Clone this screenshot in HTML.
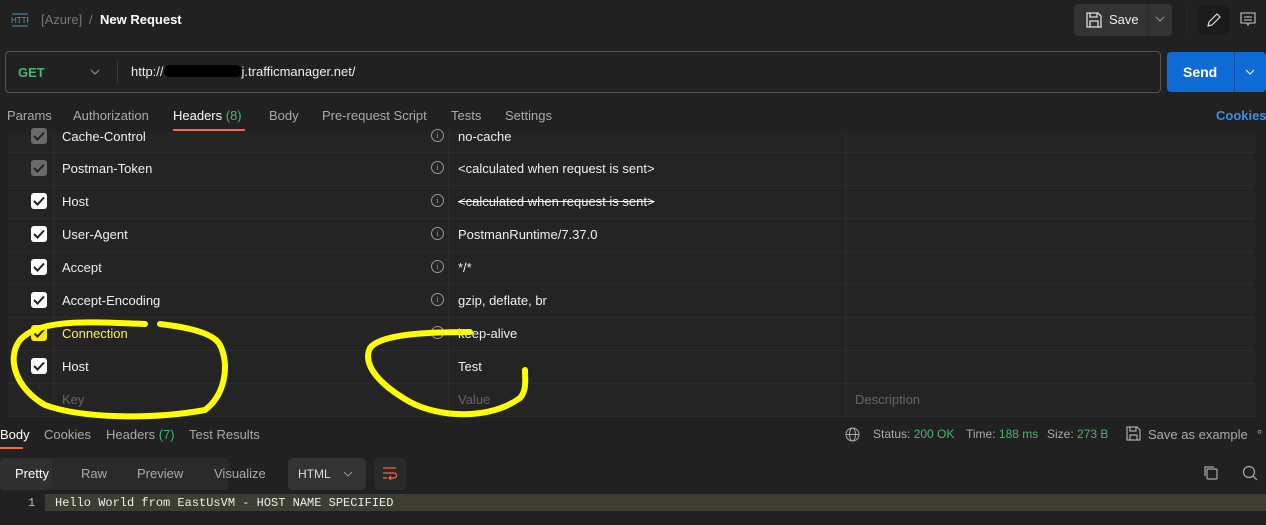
<!DOCTYPE html><html><head><style>
body{margin:0;width:1266px;height:525px;background:#212121;font-family:"Liberation Sans",sans-serif;color:#e6e6e6;font-size:13px;position:relative;overflow:hidden}
.a{position:absolute;white-space:nowrap}
.row{position:absolute;left:8px;width:1247px;height:33px;border-bottom:1px solid #2c2c2c}
.cb{position:absolute;left:23px;top:8px;width:16px;height:16px;border-radius:3px;background:#fff}
.cb.g{background:#6b6b6b}
.cb svg{position:absolute;left:2px;top:3px}
.k{position:absolute;left:54px;top:9px;color:#f0f0f0}
.i{position:absolute;left:423px;top:9px;width:11px;height:11px;border:1px solid #999;border-radius:50%;font-size:8px;color:#999;text-align:center;line-height:11px;font-family:"Liberation Serif",serif}
.v{position:absolute;left:450px;top:9px;color:#f0f0f0}
.vl{position:absolute;left:440px;top:0;height:33px;border-left:1px solid #2c2c2c}
.dl{position:absolute;left:837px;top:0;height:33px;border-left:1px solid #2c2c2c}
.cl{position:absolute;left:45px;top:0;height:33px;border-left:1px solid #2c2c2c}
.r1 .cl,.r1 .vl,.r1 .dl{height:21px}
</style></head><body>
<svg class="a" style="left:11px;top:12px" width="18" height="16"><text x="0" y="11" font-size="8" fill="#4aa3b5" font-family="Liberation Sans">HTTP</text><path d="M1 2h16M1 14h16" stroke="#4aa3b5"/></svg>
<div class="a" style="left:41px;top:12px;color:#777">[Azure]</div>
<div class="a" style="left:89px;top:12px;color:#777">/</div>
<div class="a" style="left:100px;top:12px;color:#fff;font-weight:bold">New Request</div>
<div class="a" style="left:1074px;top:4px;width:98px;height:32px;background:#333;border-radius:4px"></div>
<div class="a" style="left:1147px;top:4px;width:1px;height:32px;background:#2a2a2a"></div>
<svg class="a" style="left:1086px;top:12px" width="16" height="16"><path d="M1 1h11l3 3v11H1z M4 1v4h7V1 M4 15v-6h8v6" fill="none" stroke="#ddd" stroke-width="1.3"/></svg>
<div class="a" style="left:1109px;top:12px;color:#eee">Save</div>
<svg class="a" style="left:1155px;top:16px" width="10" height="6"><path d="M1 1l4 4 4-4" fill="none" stroke="#999"/></svg>
<div class="a" style="left:1187px;top:6px;width:1px;height:28px;background:#2b2b2b"></div>
<div class="a" style="left:1198px;top:5px;width:32px;height:30px;background:#1b1b1b;border-radius:4px"></div>
<svg class="a" style="left:1206px;top:12px" width="16" height="16"><path d="M2 14l1-4 8-8 3 3-8 8z" fill="none" stroke="#ddd" stroke-width="1.2"/></svg>
<svg class="a" style="left:1240px;top:12px" width="16" height="16"><path d="M1 1h14v10H9l-1 2-1-2H1z M4 5h8M4 8h8" fill="none" stroke="#ccc" stroke-width="1.1"/></svg>
<div class="a" style="left:5px;top:51px;width:1154px;height:40px;border:1px solid #555;border-radius:4px"></div>
<div class="a" style="left:18px;top:65px;color:#49b66f;font-weight:bold">GET</div>
<svg class="a" style="left:90px;top:69px" width="10" height="6"><path d="M1 1l4 4 4-4" fill="none" stroke="#999"/></svg>
<div class="a" style="left:117px;top:61px;width:1px;height:22px;background:#3a3a3a"></div>
<div class="a" style="left:131px;top:64px;color:#eee">http://<span style="display:inline-block;width:78px;height:12px;background:#000;border-radius:6px;vertical-align:-1px"></span>j.trafficmanager.net/</div>
<div class="a" style="left:1167px;top:52px;width:99px;height:40px;background:#0f6bd6;border-radius:4px"></div>
<div class="a" style="left:1234px;top:52px;width:1px;height:40px;background:#0a4fa3"></div>
<div class="a" style="left:1183px;top:64px;color:#fff;font-weight:bold;font-size:14px">Send</div>
<svg class="a" style="left:1245px;top:69px" width="10" height="6"><path d="M1 1l4 4 4-4" fill="none" stroke="#fff"/></svg>
<div class="a" style="left:7px;top:108px;color:#aaa">Params</div>
<div class="a" style="left:73px;top:108px;color:#aaa">Authorization</div>
<div class="a" style="left:173px;top:108px;color:#fff">Headers <span style="color:#49b66f">(8)</span></div>
<div class="a" style="left:173px;top:129px;width:72px;height:2px;background:#f26b3a"></div>
<div class="a" style="left:269px;top:108px;color:#aaa">Body</div>
<div class="a" style="left:322px;top:108px;color:#aaa">Pre-request Script</div>
<div class="a" style="left:451px;top:108px;color:#aaa">Tests</div>
<div class="a" style="left:505px;top:108px;color:#aaa">Settings</div>
<div class="a" style="left:1216px;top:108px;color:#3b8ee8;font-weight:bold">Cookies</div>

<div class="a" style="left:8px;top:131px;width:1247px;height:286px;background:#242424"></div>
<div class="row r1" style="top:131px;height:21px"><div class="cl"></div><div class="vl"></div><div class="dl"></div><div class="cb g" style="top:-3px"><svg width="12" height="10"><path d="M1 5l3.5 3.5L11 1.5" stroke="#222" stroke-width="2" fill="none"/></svg></div><div class="k" style="top:-2px">Cache-Control</div><div class="i" style="top:-2px">i</div><div class="v" style="top:-2px">no-cache</div></div>
<div class="row" style="top:152px"><div class="cl"></div><div class="vl"></div><div class="dl"></div><div class="cb g"><svg width="12" height="10"><path d="M1 5l3.5 3.5L11 1.5" stroke="#222" stroke-width="2" fill="none"/></svg></div><div class="k">Postman-Token</div><div class="i">i</div><div class="v">&lt;calculated when request is sent&gt;</div></div>
<div class="row" style="top:185px"><div class="cl"></div><div class="vl"></div><div class="dl"></div><div class="cb"><svg width="12" height="10"><path d="M1 5l3.5 3.5L11 1.5" stroke="#222" stroke-width="2" fill="none"/></svg></div><div class="k">Host</div><div class="i">i</div><div class="v" style="text-decoration:line-through">&lt;calculated when request is sent&gt;</div></div>
<div class="row" style="top:218px"><div class="cl"></div><div class="vl"></div><div class="dl"></div><div class="cb"><svg width="12" height="10"><path d="M1 5l3.5 3.5L11 1.5" stroke="#222" stroke-width="2" fill="none"/></svg></div><div class="k">User-Agent</div><div class="i">i</div><div class="v">PostmanRuntime/7.37.0</div></div>
<div class="row" style="top:251px"><div class="cl"></div><div class="vl"></div><div class="dl"></div><div class="cb"><svg width="12" height="10"><path d="M1 5l3.5 3.5L11 1.5" stroke="#222" stroke-width="2" fill="none"/></svg></div><div class="k">Accept</div><div class="i">i</div><div class="v">*/*</div></div>
<div class="row" style="top:284px"><div class="cl"></div><div class="vl"></div><div class="dl"></div><div class="cb"><svg width="12" height="10"><path d="M1 5l3.5 3.5L11 1.5" stroke="#222" stroke-width="2" fill="none"/></svg></div><div class="k">Accept-Encoding</div><div class="i">i</div><div class="v">gzip, deflate, br</div></div>
<div class="row" style="top:317px"><div class="cl"></div><div class="vl"></div><div class="dl"></div><div class="cb" style="background:#ffea00"><svg width="12" height="10"><path d="M1 5l3.5 3.5L11 1.5" stroke="#222" stroke-width="2" fill="none"/></svg></div><div class="k" style="color:#ffee55">Connection</div><div class="i">i</div><div class="v">keep-alive</div></div>
<div class="row" style="top:350px"><div class="cl"></div><div class="vl"></div><div class="dl"></div><div class="cb"><svg width="12" height="10"><path d="M1 5l3.5 3.5L11 1.5" stroke="#222" stroke-width="2" fill="none"/></svg></div><div class="k">Host</div><div class="v">Test</div></div>
<div class="row" style="top:383px"><div class="cl"></div><div class="vl"></div><div class="dl"></div><div class="k" style="color:#666">Key</div><div class="v" style="color:#666">Value</div><div class="a" style="left:847px;top:9px;color:#666">Description</div></div>
<svg class="a" style="left:0;top:310px" width="560" height="120"><path d="M145 14C90 12 40 8 20 30C5 50 18 80 45 95C80 108 150 110 205 100C225 85 230 55 220 35C215 25 195 18 160 14" fill="none" stroke="#ffff00" stroke-width="6" stroke-linecap="round"/><path d="M470 22C420 22 380 25 370 38C362 55 380 75 410 92C440 108 490 110 520 88C527 80 525 70 525 60" fill="none" stroke="#ffff00" stroke-width="6" stroke-linecap="round"/></svg>
<div class="a" style="left:0;top:427px;color:#fff">Body</div>
<div class="a" style="left:0;top:447px;width:23px;height:2px;background:#f26b3a"></div>
<div class="a" style="left:44px;top:427px;color:#aaa">Cookies</div>
<div class="a" style="left:106px;top:427px;color:#aaa">Headers <span style="color:#49b66f">(7)</span></div>
<div class="a" style="left:189px;top:427px;color:#aaa">Test Results</div>
<svg class="a" style="left:845px;top:427px" width="15" height="15"><circle cx="7.5" cy="7.5" r="6.5" fill="none" stroke="#aaa"/><ellipse cx="7.5" cy="7.5" rx="3" ry="6.5" fill="none" stroke="#aaa"/><path d="M1 7.5h13" stroke="#aaa"/></svg>
<div class="a" style="left:873px;top:427px;color:#aaa;font-size:12px">Status: <span style="color:#49b66f">200 OK</span></div>
<div class="a" style="left:966px;top:427px;color:#aaa;font-size:12px">Time: <span style="color:#49b66f">188 ms</span></div>
<div class="a" style="left:1047px;top:427px;color:#aaa;font-size:12px">Size: <span style="color:#49b66f">273 B</span></div>
<svg class="a" style="left:1126px;top:426px" width="15" height="15"><path d="M1 1h10l3 3v10H1z M4 1v4h6V1 M4 14v-5h7v5" fill="none" stroke="#aaa" stroke-width="1.2"/></svg>
<div class="a" style="left:1148px;top:427px;color:#aaa">Save as example</div>
<div class="a" style="left:1257px;top:427px;color:#aaa">°</div>
<div class="a" style="left:0;top:458px;width:228px;height:32px;background:#2a2a2a;border-radius:4px"></div>
<div class="a" style="left:0;top:458px;width:52px;height:32px;background:#303030;border-radius:4px"></div>
<div class="a" style="left:15px;top:466px;color:#fff">Pretty</div>
<div class="a" style="left:81px;top:466px;color:#aaa">Raw</div>
<div class="a" style="left:137px;top:466px;color:#aaa">Preview</div>
<div class="a" style="left:214px;top:466px;color:#aaa">Visualize</div>
<div class="a" style="left:288px;top:458px;width:78px;height:32px;background:#333;border-radius:4px"></div>
<div class="a" style="left:298px;top:467px;color:#ddd;font-size:12px">HTML</div>
<svg class="a" style="left:343px;top:471px" width="10" height="6"><path d="M1 1l4 4 4-4" fill="none" stroke="#999"/></svg>
<div class="a" style="left:374px;top:458px;width:32px;height:32px;background:#2a2a2a;border-radius:4px"></div>
<svg class="a" style="left:382px;top:465px" width="16" height="16"><path d="M1 3h13M1 8h11a2.5 2.5 0 0 1 0 5H8M1 13h4M9 11l-2 2 2 2" fill="none" stroke="#f26b3a" stroke-width="1.2"/></svg>
<svg class="a" style="left:1203px;top:465px" width="16" height="16"><rect x="4" y="4" width="10" height="10" rx="1" fill="none" stroke="#aaa" stroke-width="1.2"/><path d="M2 11V2h9" fill="none" stroke="#aaa" stroke-width="1.2"/></svg>
<svg class="a" style="left:1242px;top:465px" width="16" height="16"><circle cx="7" cy="7" r="5.5" fill="none" stroke="#aaa" stroke-width="1.2"/><path d="M11 11l4 4" stroke="#aaa" stroke-width="1.2"/></svg>
<div class="a" style="left:45px;top:494px;width:1221px;height:17px;background:#3d3d32"></div>
<div class="a" style="left:28px;top:496px;color:#bbb;font-family:'Liberation Mono',monospace;font-size:12px">1</div>
<div class="a" style="left:55px;top:496px;color:#eee;font-family:'Liberation Mono',monospace;font-size:12px">Hello World from EastUsVM - HOST NAME SPECIFIED</div>
</body></html>
